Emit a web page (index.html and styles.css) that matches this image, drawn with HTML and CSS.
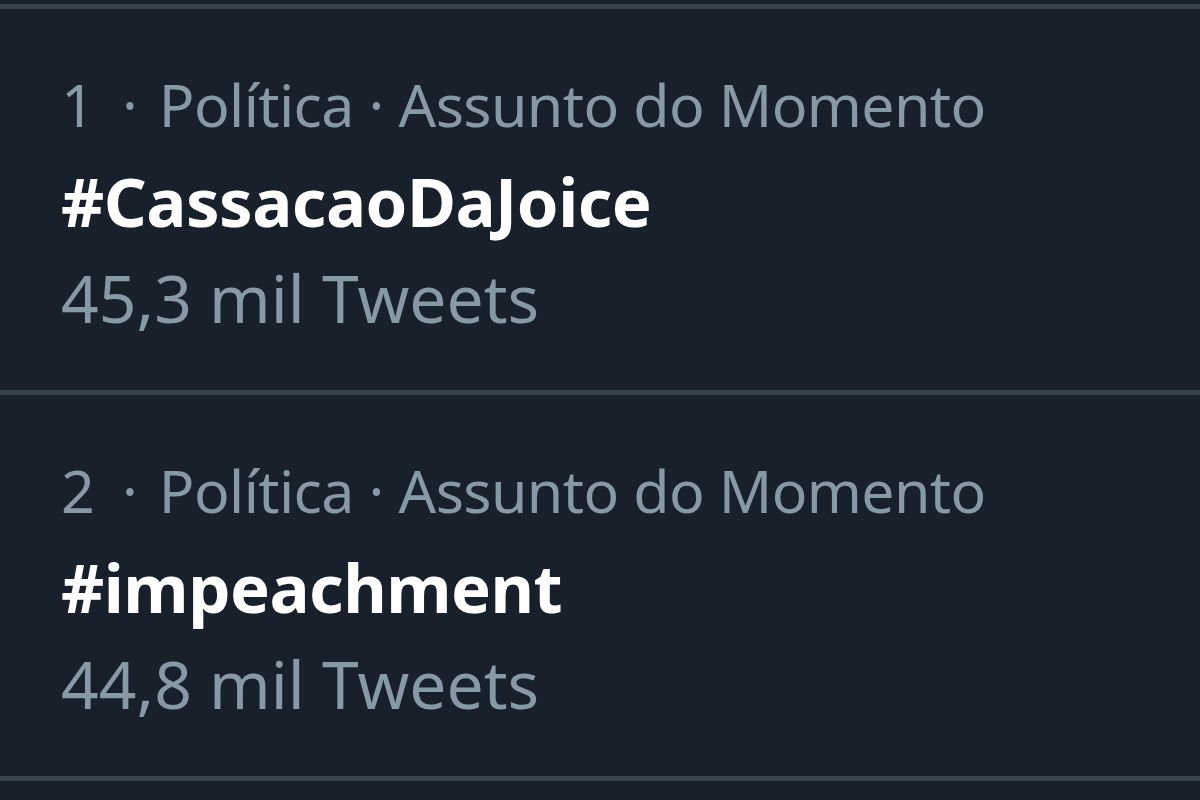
FILE: index.html
```html
<!DOCTYPE html>
<html lang="pt">
<head>
<meta charset="utf-8">
<title>Assuntos do Momento</title>
<link rel="stylesheet" href="styles.css">
</head>
<body>
<main class="trends">
  <section class="trend">
    <div class="trend-meta"><span class="rank">1</span> <span class="sep">·</span> Política · Assunto do Momento</div>
    <div class="trend-name">#CassacaoDaJoice</div>
    <div class="trend-count">45,3 mil Tweets</div>
  </section>
  <section class="trend">
    <div class="trend-meta"><span class="rank">2</span> <span class="sep">·</span> Política · Assunto do Momento</div>
    <div class="trend-name">#impeachment</div>
    <div class="trend-count">44,8 mil Tweets</div>
  </section>
  <div class="trend-end"></div>
</main>
</body>
</html>
```

FILE: styles.css
```css
html, body {
  margin: 0;
  padding: 0;
  background: #17202b;
  height: 100%;
  overflow: hidden;
}

.trends {
  padding-top: 4px;
  font-family: "Noto Sans", "Open Sans", sans-serif;
}

.trend {
  border-top: 5px solid #38444d;
  padding-left: 61px;
  padding-top: 52px;
  box-sizing: border-box;
  height: 386px;
}

.trend-end {
  border-top: 5px solid #38444d;
}

.trend-meta {
  color: #8899a6;
  font-size: 59px;
  line-height: 86px;
  letter-spacing: -0.6px;
  white-space: nowrap;
}

.rank {
  margin-right: 13px;
}

.sep {
  margin-right: 7px;
}

.trend-name {
  color: #ffffff;
  font-size: 67px;
  font-weight: 700;
  letter-spacing: -0.5px;
  line-height: 109px;
  white-space: nowrap;
}

.trend-count {
  color: #8899a6;
  font-size: 66px;
  line-height: 83px;
  white-space: nowrap;
}
```
